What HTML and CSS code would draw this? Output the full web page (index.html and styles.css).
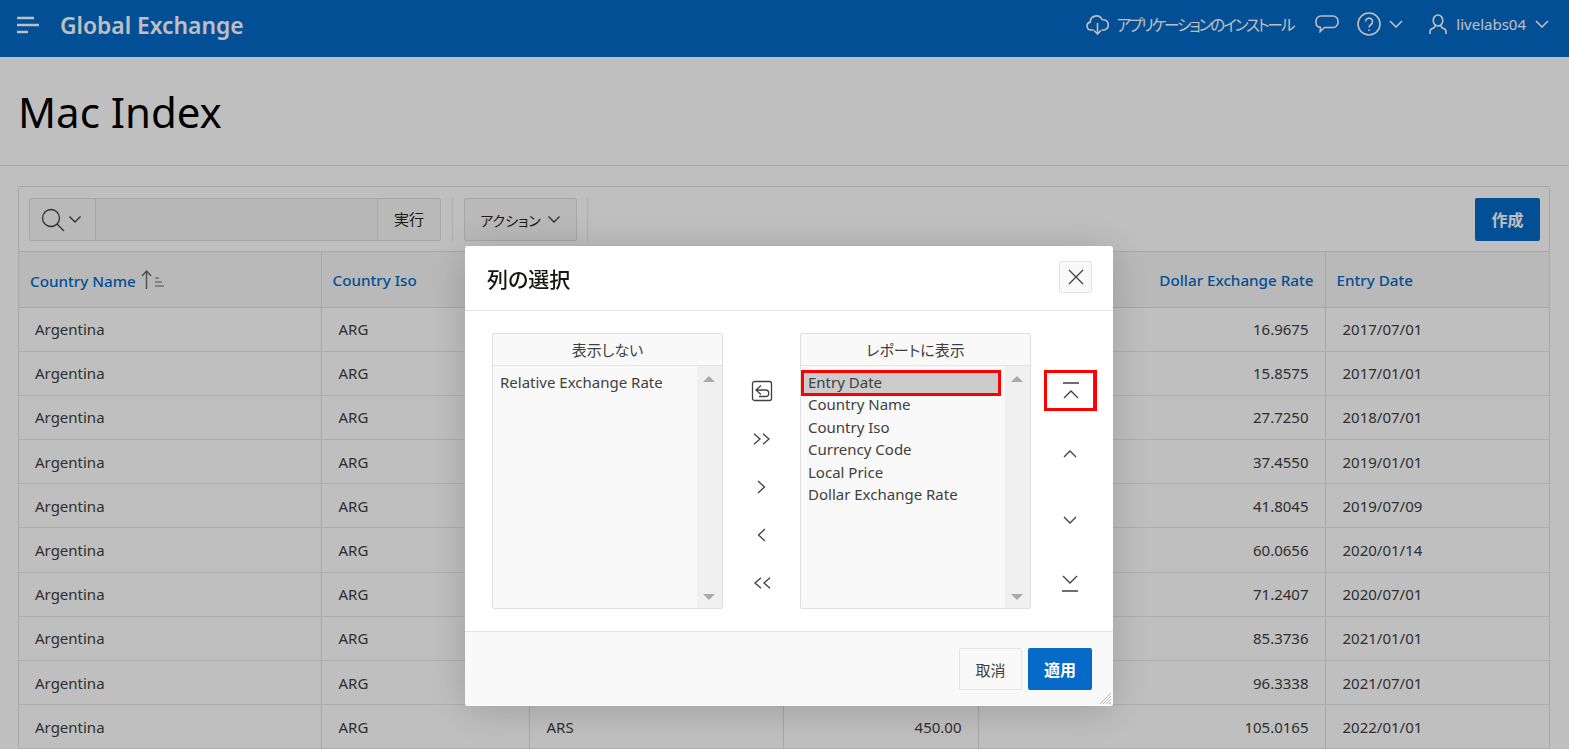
FILE: index.html
```html
<!DOCTYPE html>
<html>
<head>
  <title>Mac Index</title>
  <link rel="stylesheet" href="styles.css">
</head>
<body>
<header class="topbar">
  <svg class="burger" width="24" height="18" viewBox="0 0 24 18"><path d="M0 2h17M0 9h22M0 16h11" /></svg>
  <div class="appname">Global Exchange</div>
  <div class="topnav">
    <span class="navitem">
      <svg width="23" height="21" viewBox="0 0 23 21" class="ico"><path d="M7.500 16H5a4 4 0 0 1-.8-7.900A6.200 6.200 0 0 1 16 5.500a3.600 3.600 0 0 1 1.500.2 5.200 5.200 0 0 1 .5 10.300h-2.500M11.500 9v11M8 16.500l3.500 3.500 3.500-3.500"/></svg>
      <span class="install">アプリケーションのインストール</span>
    </span>
    <svg width="24" height="18" viewBox="0 0 24 18" class="ico bubble"><path d="M6 1h12a5 5 0 0 1 5 5v1.500a5 5 0 0 1-5 5H9.500L5.200 16.500l.3-4.100A5 5 0 0 1 1 7.500V6a5 5 0 0 1 5-5z"/></svg>
    <span class="navitem help">
      <svg width="24" height="24" viewBox="0 0 24 24" class="ico"><circle cx="12" cy="12" r="11"/><path d="M8.500 9.500a3.500 3.500 0 1 1 5.500 3c-1.500 1-2 1.500-2 3"/><path d="M12 17.500v1.500"/></svg>
      <svg width="14" height="8" viewBox="0 0 14 8" class="ico"><path d="M1 1l6 6 6-6"/></svg>
    </span>
    <span class="navitem user">
      <svg width="18" height="21" viewBox="0 0 18 21" class="ico"><ellipse cx="9" cy="6.500" rx="4.800" ry="5.500"/><path d="M6 11.500c0 1.500-1 2.500-2.500 3C2 15 1 16 1 17.500V20M12 11.500c0 1.500 1 2.500 2.500 3 1.500.5 2.500 1.500 2.500 3V20"/></svg>
      <span class="username">livelabs04</span>
      <svg width="14" height="8" viewBox="0 0 14 8" class="ico"><path d="M1 1l6 6 6-6"/></svg>
    </span>
  </div>
</header>

<section class="hero"><h1>Mac Index</h1></section>

<section class="card">
  <div class="toolbar">
    <div class="searchgroup">
      <span class="searchicon">
        <svg width="24" height="24" viewBox="0 0 24 24" class="line"><circle cx="10" cy="10" r="8.500"/><path d="M16 16l7 7"/></svg>
        <svg width="12" height="7" viewBox="0 0 12 7" class="line"><path d="M.5.500L6 6 11.500.500"/></svg>
      </span>
      <span class="searchinput"></span>
      <span class="gobtn">実行</span>
    </div>
    <span class="sep"></span>
    <span class="actions">アクション
      <svg width="12" height="7" viewBox="0 0 12 7" class="line"><path d="M.5.500L6 6 11.500.500"/></svg>
    </span>
    <span class="sep"></span>
    <span class="createbtn">作成</span>
  </div>
  <table class="report">
    <colgroup>
      <col class="c1"><col class="c2"><col class="c3"><col class="c4"><col class="c5"><col class="c6">
    </colgroup>
    <tr>
      <th>Country Name
        <svg class="sorticon" width="24" height="20" viewBox="0 0 24 20"><path d="M5.500 19V1.500M1 6l4.500-5L10 6"/><path class="thin" d="M14 8h4M14 12h7M14 16h9"/></svg>
      </th>
      <th>Country Iso</th>
      <th></th>
      <th class="num"></th>
      <th class="num">Dollar Exchange Rate</th>
      <th>Entry Date</th>
    </tr>
    <tr><td>Argentina</td><td>ARG</td><td></td><td class="num"></td><td class="num">16.9675</td><td>2017/07/01</td></tr>
    <tr><td>Argentina</td><td>ARG</td><td></td><td class="num"></td><td class="num">15.8575</td><td>2017/01/01</td></tr>
    <tr><td>Argentina</td><td>ARG</td><td></td><td class="num"></td><td class="num">27.7250</td><td>2018/07/01</td></tr>
    <tr><td>Argentina</td><td>ARG</td><td></td><td class="num"></td><td class="num">37.4550</td><td>2019/01/01</td></tr>
    <tr><td>Argentina</td><td>ARG</td><td></td><td class="num"></td><td class="num">41.8045</td><td>2019/07/09</td></tr>
    <tr><td>Argentina</td><td>ARG</td><td></td><td class="num"></td><td class="num">60.0656</td><td>2020/01/14</td></tr>
    <tr><td>Argentina</td><td>ARG</td><td></td><td class="num"></td><td class="num">71.2407</td><td>2020/07/01</td></tr>
    <tr><td>Argentina</td><td>ARG</td><td></td><td class="num"></td><td class="num">85.3736</td><td>2021/01/01</td></tr>
    <tr><td>Argentina</td><td>ARG</td><td></td><td class="num"></td><td class="num">96.3338</td><td>2021/07/01</td></tr>
    <tr><td>Argentina</td><td>ARG</td><td>ARS</td><td class="num">450.00</td><td class="num">105.0165</td><td>2022/01/01</td></tr>
  </table>
</section>

<div class="overlay"></div>

<div class="modal">
  <div class="modalhead">
    <h2>列の選択</h2>
    <span class="closebtn">
      <svg width="16" height="16" viewBox="0 0 16 16" class="line"><path d="M1 1l14 14M15 1L1 15"/></svg>
    </span>
  </div>
  <div class="modalbody">
    <div class="listbox">
      <div class="listhead">表示しない</div>
      <div class="listmain">
        <ul class="items">
          <li>Relative Exchange Rate</li>
        </ul>
        <div class="scroll"><span class="up"></span><span class="down"></span></div>
      </div>
    </div>
    <div class="ctrls">
      <span class="ctrl"><svg width="22" height="22" viewBox="0 0 22 22" class="line"><rect x="1.500" y="1.500" width="19" height="19" rx="2"/><path d="M10 5.500L5 10l5 4.500M5 10h9.500a3.200 3.200 0 0 1 0 6.500H8"/></svg></span>
      <span class="ctrl"><svg width="18" height="12" viewBox="0 0 18 12" class="line"><path d="M1 .800L7 6 1 11.200M10 .800L16 6l-6 5.200"/></svg></span>
      <span class="ctrl"><svg width="9" height="14" viewBox="0 0 9 14" class="line"><path d="M1 1l6.500 6L1 13"/></svg></span>
      <span class="ctrl"><svg width="9" height="14" viewBox="0 0 9 14" class="line"><path d="M8 1L1.500 7 8 13"/></svg></span>
      <span class="ctrl"><svg width="18" height="12" viewBox="0 0 18 12" class="line"><path d="M8 .800L2 6l6 5.200M17 .800L11 6l6 5.200"/></svg></span>
    </div>
    <div class="listbox">
      <div class="listhead">レポートに表示</div>
      <div class="listmain">
        <ul class="items">
          <li class="picked">Entry Date</li>
          <li>Country Name</li>
          <li>Country Iso</li>
          <li>Currency Code</li>
          <li>Local Price</li>
          <li>Dollar Exchange Rate</li>
        </ul>
        <div class="scroll"><span class="up"></span><span class="down"></span></div>
      </div>
    </div>
    <div class="ctrls order">
      <span class="ctrl marked"><svg width="18" height="18" viewBox="0 0 18 18" class="line"><path d="M1 1h16M2 16l7-7 7 7"/></svg></span>
      <span class="ctrl moveup"><svg width="14" height="8" viewBox="0 0 14 8" class="line"><path d="M1 7l6-6 6 6"/></svg></span>
      <span class="ctrl movedown"><svg width="14" height="8" viewBox="0 0 14 8" class="line"><path d="M1 1l6 6 6-6"/></svg></span>
      <span class="ctrl"><svg width="18" height="18" viewBox="0 0 18 18" class="line"><path d="M2 2l7 7 7-7M1 17h16"/></svg></span>
    </div>
  </div>
  <div class="modalfoot">
    <span class="cancelbtn">取消</span>
    <span class="applybtn">適用</span>
  </div>
  <svg class="grip" width="14" height="14" viewBox="0 0 14 14"><path d="M13 2L2 13M13 5L5 13M13 8L8 13M13 11L11 13"/></svg>
</div>
</body>
</html>
```

FILE: styles.css
```css
html, body {
  margin: 0;
  height: 100%;
  overflow: hidden;
}

body {
  background: #fff;
  color: #262626;
  font-family: "Noto Sans", "Noto Sans CJK JP", sans-serif;
  font-size: 15px;
  font-feature-settings: "palt";
}

svg {
  display: block;
  fill: none;
}

.line path, .line circle, .line rect {
  stroke: #404040;
  stroke-width: 1.3;
}

/* top bar */
.topbar {
  height: 57px;
  background: #056ac8;
  display: flex;
  align-items: center;
  padding: 0 20px 0 17px;
  color: #fff;
}

.burger {
  margin-top: -7px;
}

.burger path {
  stroke: #fff;
  stroke-width: 2.500;
}

.appname {
  margin-left: 19px;
  margin-top: -6px;
  font-size: 22.800px;
  font-weight: 600;
}

.topnav {
  margin-left: auto;
  margin-top: -9px;
  display: flex;
  align-items: center;
}

.navitem {
  display: flex;
  align-items: center;
}

.ico path, .ico circle, .ico ellipse {
  stroke: #fff;
  stroke-width: 1.600;
}

.install {
  margin-left: 8px;
  font-size: 15.500px;
  letter-spacing: -2.100px;
}

.bubble {
  margin-left: 22px;
}

.help {
  margin-left: 18px;
  gap: 8px;
}

.user {
  margin-left: 26px;
}

.username {
  margin: 0 9px;
}

/* page title */
.hero {
  height: 109px;
  box-sizing: border-box;
  border-bottom: 1px solid #dfdfdf;
  display: flex;
  align-items: center;
  padding-left: 18px;
  background: #fff;
}

h1 {
  margin: 0;
  font-size: 42px;
  font-weight: 400;
  color: #000;
}

/* report */
.card {
  margin: 20px 19px 0 18px;
  border: 1px solid #dfdfdf;
  border-radius: 2px;
}

.toolbar {
  height: 65px;
  box-sizing: border-box;
  padding: 11px 9px 10px 10px;
  display: flex;
  align-items: stretch;
  background: #fff;
  border-bottom: 1px solid #dfdfdf;
}

.searchgroup {
  display: flex;
  width: 412px;
  border: 1px solid #dfdfdf;
  border-radius: 2px;
  box-sizing: border-box;
  background: #f7f7f7;
}

.searchicon {
  width: 66px;
  display: flex;
  align-items: center;
  gap: 4px;
  padding-left: 11px;
  box-sizing: border-box;
  border-right: 1px solid #dfdfdf;
}

.searchinput {
  flex: 1;
  background: #f5f5f5;
}

.gobtn {
  width: 63px;
  padding-bottom: 2px;
  box-sizing: border-box;
  border-left: 1px solid #dfdfdf;
  display: flex;
  align-items: center;
  justify-content: center;
}

.sep {
  width: 1px;
  background: #e8e8e8;
  margin: 0 11px;
}

.actions {
  width: 113px;
  padding-right: 1px;
  box-sizing: border-box;
  border: 1px solid #dfdfdf;
  border-radius: 2px;
  background: #f7f7f7;
  display: flex;
  align-items: center;
  justify-content: center;
  gap: 7px;
  font-size: 14px;
}

.actions + .sep {
  margin-left: 10px;
}

.createbtn {
  margin-left: auto;
  width: 65px;
  padding-bottom: 2px;
  box-sizing: border-box;
  background: #056ac8;
  color: #fff;
  border-radius: 2px;
  font-size: 16px;
  font-weight: 700;
  display: flex;
  align-items: center;
  justify-content: center;
}

.report {
  width: 100%;
  table-layout: fixed;
  border-collapse: collapse;
}

.c1 { width: 302px; }
.c2 { width: 208px; }
.c3 { width: 254px; }
.c4 { width: 195px; }
.c5 { width: 347px; }

th {
  height: 55px;
  padding: 2px 11px 0;
  box-sizing: border-box;
  text-align: left;
  font-size: 15.200px;
  font-weight: 500;
  color: #056ac8;
  background: #f7f7f7;
  border-bottom: 1px solid #dfdfdf;
  border-left: 1px solid #dfdfdf;
  white-space: nowrap;
}

th:first-child, td:first-child {
  border-left: 0;
}

.sorticon {
  display: inline-block;
  vertical-align: -3px;
  margin-left: 1px;
}

.sorticon path {
  stroke: #666;
  stroke-width: 1.400;
}

.sorticon .thin {
  stroke-width: 1;
}

td {
  height: 44.200px;
  padding: 0 16px 0 17px;
  box-sizing: border-box;
  color: #404040;
  border-bottom: 1px solid #e8e8e8;
  border-left: 1px solid #dfdfdf;
  white-space: nowrap;
}

td:first-child {
  padding-left: 16px;
}

th.num, td.num {
  text-align: right;
}

/* dialog */
.overlay {
  position: fixed;
  inset: 0;
  background: rgba(0, 0, 0, .25);
}

.modal {
  position: fixed;
  left: 465px;
  top: 246px;
  width: 648px;
  height: 460px;
  display: flex;
  flex-direction: column;
  background: #fff;
  border-radius: 3px;
  box-shadow: 0 4px 40px rgba(0, 0, 0, .18);
}

.modalhead {
  height: 65px;
  box-sizing: border-box;
  border-bottom: 1px solid #e4e4e4;
  padding: 0 21px 0 22px;
  display: flex;
  align-items: center;
  justify-content: space-between;
}

h2 {
  margin: 0;
  font-size: 21px;
  font-weight: 500;
  color: #161513;
}

.closebtn {
  width: 33px;
  height: 32px;
  box-sizing: border-box;
  border: 1px solid #e4e4e4;
  border-radius: 2px;
  background: #f9f9f9;
  display: flex;
  align-items: center;
  justify-content: center;
  margin-top: -2px;
}

.modalbody {
  flex: 1;
  display: flex;
  padding: 22px 0 0 27px;
}

.listbox {
  width: 231px;
  height: 276px;
  box-sizing: border-box;
  border: 1px solid #dfdfdf;
  border-radius: 2px;
  display: flex;
  flex-direction: column;
  background: #f9f9f9;
}

.listhead {
  height: 32px;
  flex: none;
  box-sizing: border-box;
  border-bottom: 1px solid #e4e4e4;
  display: flex;
  align-items: center;
  justify-content: center;
  color: #404040;
}

.listmain {
  flex: 1;
  display: flex;
}

.items {
  flex: 1;
  margin: 0;
  padding: 6px 2px;
  list-style: none;
  color: #404040;
}

.items li {
  height: 22.400px;
  line-height: 20.400px;
  padding-left: 5px;
}

.items .picked {
  background: #ccc;
  outline: 3px solid #f00;
  outline-offset: -1px;
  width: 191px;
}

.scroll {
  width: 25px;
  background: #f0f0f0;
  position: relative;
}

.up, .down {
  position: absolute;
  left: 6px;
  width: 0;
  border-left: 6px solid transparent;
  border-right: 6px solid transparent;
}

.up {
  top: 10px;
  border-bottom: 6px solid #a9a9a9;
}

.down {
  bottom: 8px;
  border-top: 6px solid #a9a9a9;
}

.ctrls {
  width: 77px;
  padding-top: 38px;
  box-sizing: border-box;
  display: flex;
  flex-direction: column;
  gap: 8px;
}

.ctrl {
  height: 40px;
  display: flex;
  align-items: center;
  justify-content: center;
}

.order {
  padding-top: 37px;
  gap: 23px;
}

.order .ctrl {
  height: 41px;
}

.moveup svg {
  margin-bottom: 2px;
}

.movedown svg {
  margin-top: 2px;
}

.marked {
  box-sizing: border-box;
  width: 53px;
  margin-left: 13px;
  border: 3px solid #f00;
  box-shadow: inset -1px 0 0 #056ac8;
}

.modalfoot {
  height: 75px;
  box-sizing: border-box;
  border-top: 1px solid #e4e4e4;
  background: #f9f9f9;
  border-radius: 0 0 3px 3px;
  display: flex;
  justify-content: flex-end;
  gap: 6px;
  padding: 16px 21px 0 0;
}

.cancelbtn, .applybtn {
  height: 42px;
  box-sizing: border-box;
  border-radius: 2px;
  display: flex;
  align-items: center;
  justify-content: center;
}

.cancelbtn {
  width: 63px;
  border: 1px solid #e4e4e4;
  color: #404040;
}

.applybtn {
  width: 64px;
  background: #056ac8;
  color: #fff;
  font-size: 16px;
  font-weight: 700;
}

.grip {
  position: absolute;
  right: 1px;
  bottom: 1px;
}

.grip path {
  stroke: #b5b5b5;
  stroke-width: 1;
}
```
